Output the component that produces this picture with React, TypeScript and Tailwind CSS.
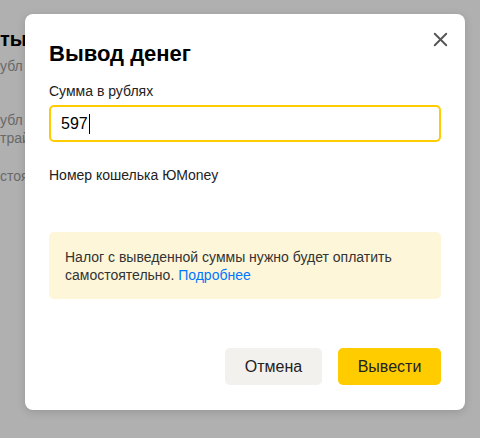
import { X } from "lucide-react";

const font = { fontFamily: '"Liberation Sans", Arial, sans-serif' };

function BackgroundPage() {
  return (
    <div className="absolute inset-0 bg-white">
      <div className="w-[25px] overflow-hidden whitespace-nowrap text-[#999]">
        <div className="pt-[27px] text-[20px] font-bold leading-[24px] text-black">тых</div>
        <div className="mt-[6px] text-[14px] leading-[18px]">убл</div>
        <div className="mt-[36px] text-[14px] leading-[18px]">убл</div>
        <div className="text-[14px] leading-[18px]">трай</div>
        <div className="mt-[20px] text-[14px] leading-[18px]">стоя</div>
      </div>
    </div>
  );
}

export default function App() {
  return (
    <div className="relative w-[480px] h-[438px] overflow-hidden" style={font}>
      <BackgroundPage />
      <div className="absolute inset-0 bg-black/[0.31] pl-[25px] pt-[14px]">
        <div className="relative w-[440px] h-[396px] bg-white rounded-[8px] shadow-[0_2px_8px_rgba(0,0,0,0.15)] px-[24px] pt-[26px]">
          <button className="absolute right-[12px] top-[12px] w-[26px] h-[26px] flex items-center justify-center text-[#555]">
            <X size={23} strokeWidth={2} />
          </button>
          <h2 className="text-[22px] font-bold leading-[28px] text-black">Вывод денег</h2>
          <label className="block mt-[14px] text-[14px] leading-[18px] text-[#222]">Сумма в рублях</label>
          <div className="mt-[5px] h-[37px] w-[392px] border-2 border-[#ffcc00] rounded-[5px] flex items-center px-[10px] text-[16px] text-black">
            597<span className="inline-block w-px h-[20px] bg-black ml-px" />
          </div>
          <div className="mt-[24px] text-[14px] leading-[18px] text-[#222]">Номер кошелька ЮMoney</div>
          <div className="mt-[48px] w-[392px] h-[67px] bg-[#fef6d8] rounded-[5px] px-[16px] pt-[16px] text-[14px] leading-[18px] text-[#333]">
            <p>
              Налог с выведенной суммы нужно будет оплатить самостоятельно. <a className="text-[#0077ff]">Подробнее</a>
            </p>
          </div>
          <div className="mt-[49px] w-[392px] flex justify-end gap-[16px]">
            <button className="h-[37px] w-[97px] rounded-[5px] bg-[#f2f1ee] text-[16px] text-[#222]">Отмена</button>
            <button className="h-[37px] w-[103px] rounded-[5px] bg-[#ffcc00] text-[16px] text-[#222]">Вывести</button>
          </div>
        </div>
      </div>
    </div>
  );
}
